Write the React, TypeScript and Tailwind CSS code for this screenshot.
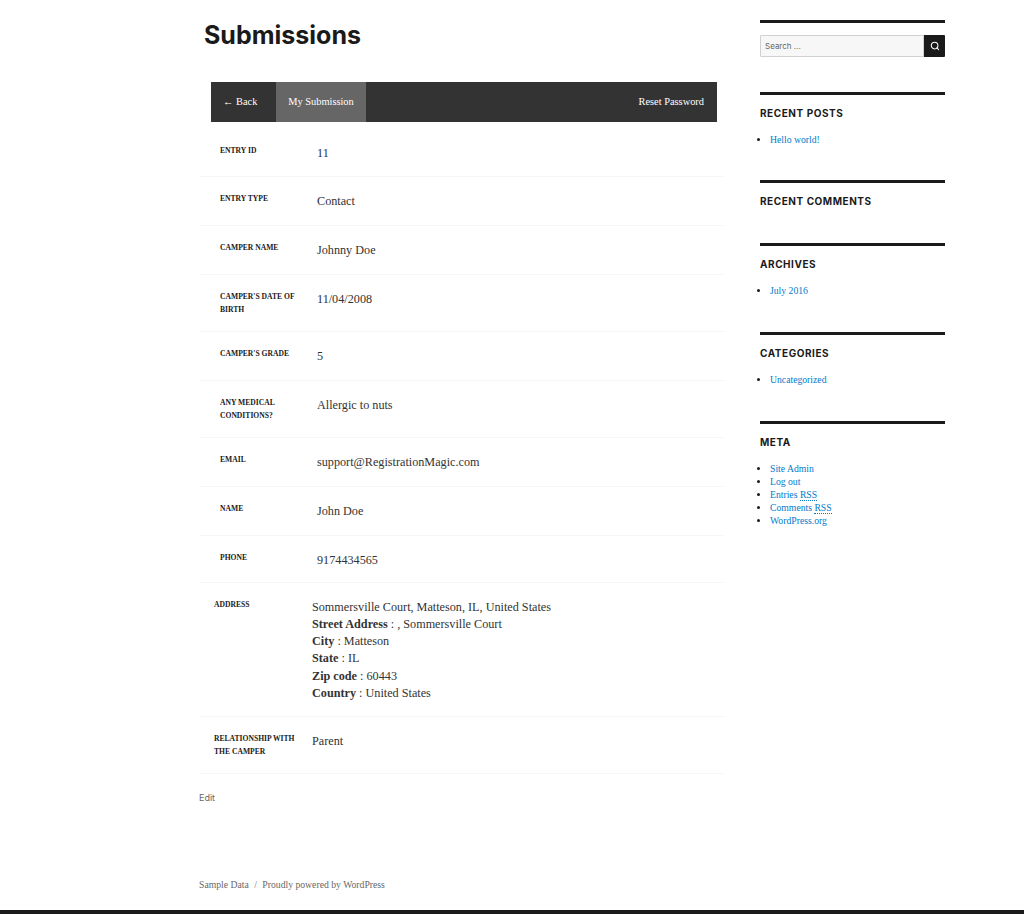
import { Search } from "lucide-react";

const serif = "font-['Liberation_Serif',serif]";

type RowProps = {
  label: string[];
  value?: string;
  height: string;
  inset?: boolean;
  children?: React.ReactNode;
};

const Row = ({ label, value, height, inset, children }: RowProps) => (
  <div className={`flex border-b border-[#f6f6f6] ${height} ${inset ? "pl-[15px]" : "pl-[21px]"}`}>
    <div className={`shrink-0 pt-[15px] ${inset ? "w-[98px]" : "w-[97px]"}`}>
      {label.map((line) => (
        <div key={line} className="text-[7.6px] leading-[13px] font-bold text-[#1a1a1a] uppercase">
          {line}
        </div>
      ))}
    </div>
    <div className={`${inset ? "pt-[15.5px]" : "pt-[15.5px]"} text-[12.2px] leading-[17.25px] text-[#333]`}>
      {children ?? value}
    </div>
  </div>
);

const Widget = ({ title, links, top }: { title?: string; links?: React.ReactNode[]; top: string }) => (
  <section className={`border-t-[3px] border-[#1a1a1a] ${top}`}>
    {title && (
      <h2 className="mt-[11px] font-['Inter',sans-serif] text-[10px] leading-[14px] font-bold tracking-[0.55px] text-[#1a1a1a] uppercase">
        {title}
      </h2>
    )}
    {links && (
      <ul className="mt-[13px] list-disc pl-[10px] text-[9.7px] leading-[13px] text-[#007acc] marker:text-[#1a1a1a]">
        {links.map((link, i) => (
          <li key={i}>{link}</li>
        ))}
      </ul>
    )}
  </section>
);

const Rss = () => <span className="border-b border-dotted border-[#007acc]">RSS</span>;

export default function App() {
  return (
    <div className={`flex min-h-[914px] flex-col justify-between border-b-[4px] border-[#1a1a1a] bg-white ${serif}`}>
      <div className="ml-[199px] flex w-[746px] gap-[36px]">
        <main className="w-[525px] shrink-0">
          <h1 className="mt-[18px] ml-[5px] font-['Inter',sans-serif] text-[25px] leading-[34px] font-bold text-[#1a1a1a]">
            Submissions
          </h1>

          <nav className="mt-[30px] mb-[7px] ml-[12px] flex h-[40px] w-[506px] items-center bg-[#333] text-[10.4px] text-white">
            <a className="flex h-full w-[65px] items-center pl-[12px]">← Back</a>
            <a className="flex h-full w-[90px] items-center justify-center bg-[#666]">My Submission</a>
            <a className="ml-auto pr-[13px]">Reset Password</a>
          </nav>

          <Row label={["Entry ID"]} value="11" height="h-[48px]" />
          <Row label={["Entry Type"]} value="Contact" height="h-[49px]" />
          <Row label={["Camper Name"]} value="Johnny Doe" height="h-[49px]" />
          <Row label={["Camper's Date of", "Birth"]} value="11/04/2008" height="h-[57px]" />
          <Row label={["Camper's Grade"]} value="5" height="h-[49px]" />
          <Row label={["Any Medical", "Conditions?"]} value="Allergic to nuts" height="h-[57px]" />
          <Row label={["Email"]} value="support@RegistrationMagic.com" height="h-[49px]" />
          <Row label={["Name"]} value="John Doe" height="h-[49px]" />
          <Row label={["Phone"]} value="9174434565" height="h-[47px]" />
          <Row label={["Address"]} height="h-[134px]" inset>
            <div>Sommersville Court, Matteson, IL, United States</div>
            <div><b>Street Address</b> : , Sommersville Court</div>
            <div><b>City</b> : Matteson</div>
            <div><b>State</b> : IL</div>
            <div><b>Zip code</b> : 60443</div>
            <div><b>Country</b> : United States</div>
          </Row>
          <Row label={["Relationship with", "the Camper"]} value="Parent" height="h-[57px]" inset />

          <a className="mt-[18px] block font-['Inter',sans-serif] text-[9px] leading-[12px] text-[#686868]">Edit</a>
        </main>

        <aside className="w-[185px] shrink-0">
          <Widget top="mt-[20px]" />
          <form className="mt-[12px] flex h-[22px]">
            <div className="flex flex-1 items-center rounded-l-[1px] border border-[#d1d1d1] bg-[#f7f7f7] pl-[4px] font-['Inter',sans-serif] text-[8px] text-[#686868]">
              Search ...
            </div>
            <button type="button" className="flex w-[21px] items-center justify-center rounded-r-[1px] bg-[#1a1a1a] text-white">
              <Search size={10} strokeWidth={2.5} />
            </button>
          </form>
          <Widget title="Recent Posts" top="mt-[35px]" links={["Hello world!"]} />
          <Widget title="Recent Comments" top="mt-[34px]" />
          <Widget title="Archives" top="mt-[35px]" links={["July 2016"]} />
          <Widget title="Categories" top="mt-[35px]" links={["Uncategorized"]} />
          <Widget
            title="Meta"
            top="mt-[35px]"
            links={[
              "Site Admin",
              "Log out",
              <>Entries <Rss /></>,
              <>Comments <Rss /></>,
              "WordPress.org",
            ]}
          />
        </aside>
      </div>

      <footer className="mb-[19px] ml-[199px] text-[9.7px] leading-[13px] text-[#686868]">
        Sample Data <span className="mx-[3px]">/</span> Proudly powered by WordPress
      </footer>
    </div>
  );
}
